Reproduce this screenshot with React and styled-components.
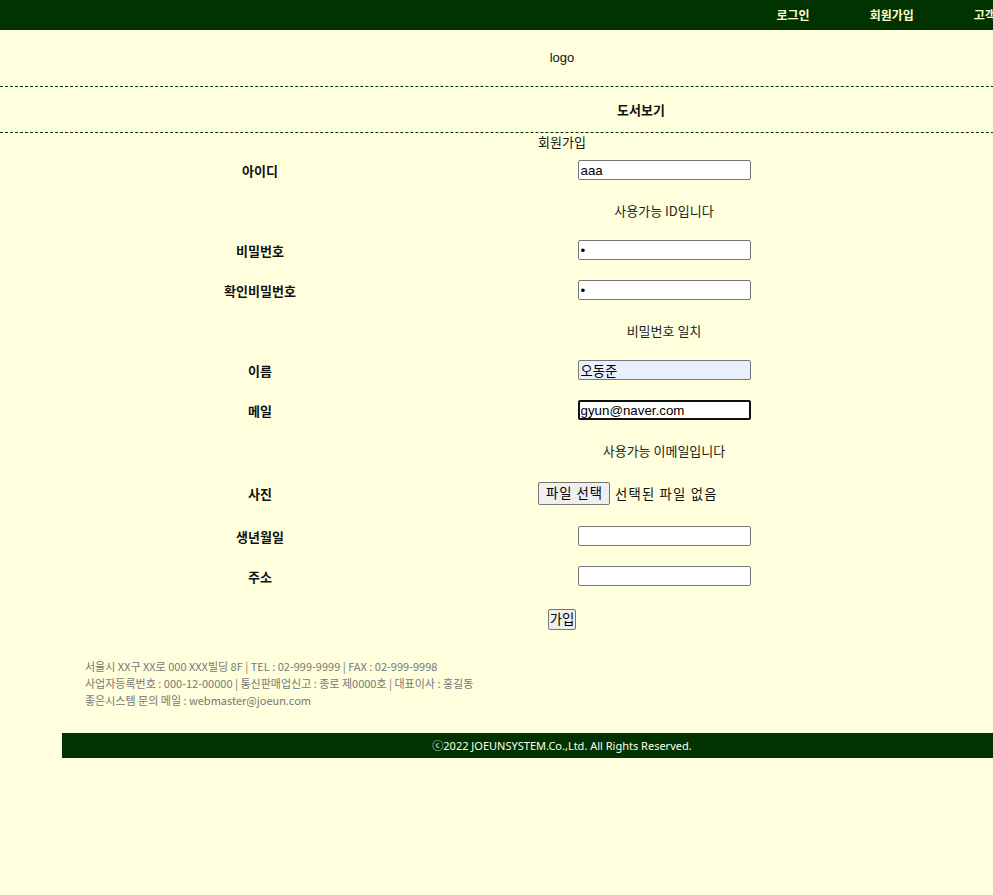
import React from "react";
import styled, { createGlobalStyle } from "styled-components";

const Global = createGlobalStyle`
  html, body { margin: 0; padding: 0; background: #ffffdd; overflow-x: hidden; }
  body { font-family: "Noto Sans CJK KR", "Noto Sans", sans-serif; font-size: 13px; color: #111; }
`;

const Page = styled.div`
  width: 1124px;
  background: #ffffdd;
`;

const TopBar = styled.header`
  height: 30px;
  background: #003300;
  display: flex;
  justify-content: flex-end;
  align-items: center;
  padding-right: 76px;
  box-sizing: border-box;
`;

const MenuItem = styled.a`
  color: #ffffcc;
  font-weight: bold;
  font-size: 12px;
  padding: 0 30px;
  text-decoration: none;
  line-height: 30px;
`;

const LogoArea = styled.div`
  height: 56px;
  line-height: 56px;
  text-align: center;
  font-size: 13px;
  font-family: "Liberation Sans", "Noto Sans CJK KR", sans-serif;
  border-bottom: 1px dashed #003300;
`;

const Nav = styled.nav`
  height: 45px;
  display: flex;
  justify-content: center;
  align-items: center;
  padding-left: 158px;
  border-bottom: 1px dashed #003300;
`;

const NavItem = styled.a`
  font-weight: bold;
  font-size: 13px;
  color: #111;
  text-decoration: none;
`;

const Caption = styled.div`
  height: 17px;
  line-height: 17px;
  text-align: center;
  font-size: 13px;
`;

const Form = styled.form`
  width: 808px;
  margin: 0 auto;
  display: grid;
  grid-template-columns: 204px 604px;
`;

const Label = styled.div`
  height: ${(p) => p.$h || 40}px;
  display: flex;
  align-items: center;
  justify-content: center;
  font-weight: bold;
  font-size: 13px;
`;

const Cell = styled.div`
  height: ${(p) => p.$h || 40}px;
  display: flex;
  align-items: center;
  justify-content: center;
  grid-column: ${(p) => (p.$full ? "1 / 3" : "auto")};
`;

const Msg = styled.span`
  font-size: 13px;
  color: #222;
`;

const TextInput = styled.input`
  width: 173px;
  height: 20px;
  box-sizing: border-box;
  border: ${(p) => (p.$focused ? "2px solid #101010" : "1px solid #767676")};
  border-radius: 2px;
  padding: ${(p) => (p.$focused ? "0 1px" : "0 2px")};
  font-family: "Liberation Sans", "Noto Sans CJK KR", sans-serif;
  font-size: 13.33px;
  color: #000;
  background: ${(p) => (p.$autofill ? "#e8f0fe" : "#fff")};
  outline: none;
`;

const FileBox = styled.div`
  width: 252px;
  display: flex;
  align-items: center;
  gap: 5px;
  font-size: 13.33px;
  letter-spacing: 1.2px;
`;

const Btn = styled.button`
  font-family: "Noto Sans CJK KR", sans-serif;
  font-size: 13.33px;
  letter-spacing: ${(p) => (p.$small ? "0" : "1px")};
  background: #efefef;
  color: #000;
  border: 1px solid #767676;
  border-radius: 2px;
  padding: ${(p) => (p.$small ? "0 1px" : "0 6px 0 7px")};
  height: ${(p) => (p.$small ? 21 : 23)}px;
  line-height: 1;
`;

const FooterInfo = styled.footer`
  width: 1000px;
  margin: 16px auto 0;
  box-sizing: border-box;
  padding: 0 23px;
  font-size: 11px;
  line-height: 17px;
  color: #777;
`;

const Copy = styled.div`
  width: 1000px;
  margin: 24px auto 0;
  height: 25px;
  line-height: 25px;
  background: #003300;
  color: #ffffee;
  text-align: center;
  font-size: 11px;
  font-family: "Noto Sans", "Noto Sans CJK KR", sans-serif;
`;

const Bottom = styled.div`
  height: 140px;
`;

export default function App() {
  return (
    <Page>
      <Global />
      <TopBar>
        <MenuItem>로그인</MenuItem>
        <MenuItem>회원가입</MenuItem>
        <MenuItem>고객센터</MenuItem>
      </TopBar>
      <LogoArea>logo</LogoArea>
      <Nav>
        <NavItem>도서보기</NavItem>
      </Nav>
      <Caption>회원가입</Caption>
      <Form onSubmit={(e) => e.preventDefault()}>
        <Label>아이디</Label>
        <Cell><TextInput defaultValue="aaa" /></Cell>

        <Cell />
        <Cell><Msg>사용가능 ID입니다</Msg></Cell>

        <Label>비밀번호</Label>
        <Cell><TextInput type="password" defaultValue="a" /></Cell>

        <Label>확인비밀번호</Label>
        <Cell><TextInput type="password" defaultValue="a" /></Cell>

        <Cell />
        <Cell><Msg>비밀번호 일치</Msg></Cell>

        <Label>이름</Label>
        <Cell><TextInput $autofill defaultValue="오동준" /></Cell>

        <Label>메일</Label>
        <Cell><TextInput $focused defaultValue="gyun@naver.com" /></Cell>

        <Cell />
        <Cell><Msg>사용가능 이메일입니다</Msg></Cell>

        <Label $h={46}>사진</Label>
        <Cell $h={46}>
          <FileBox>
            <Btn type="button">파일 선택</Btn>
            <span>선택된 파일 없음</span>
          </FileBox>
        </Cell>

        <Label>생년월일</Label>
        <Cell><TextInput /></Cell>

        <Label>주소</Label>
        <Cell><TextInput /></Cell>

        <Cell $full $h={46}>
          <Btn $small type="submit">가입</Btn>
        </Cell>
      </Form>
      <FooterInfo>
        <div>서울시 XX구 XX로 000 XXX빌딩 8F | TEL : 02-999-9999 | FAX : 02-999-9998</div>
        <div>사업자등록번호 : 000-12-00000 | 통신판매업신고 : 종로 제0000호 | 대표이사 : 홍길동</div>
        <div>좋은시스템 문의 메일 : webmaster@joeun.com</div>
      </FooterInfo>
      <Copy>ⓒ2022 JOEUNSYSTEM.Co.,Ltd. All Rights Reserved.</Copy>
      <Bottom />
    </Page>
  );
}
